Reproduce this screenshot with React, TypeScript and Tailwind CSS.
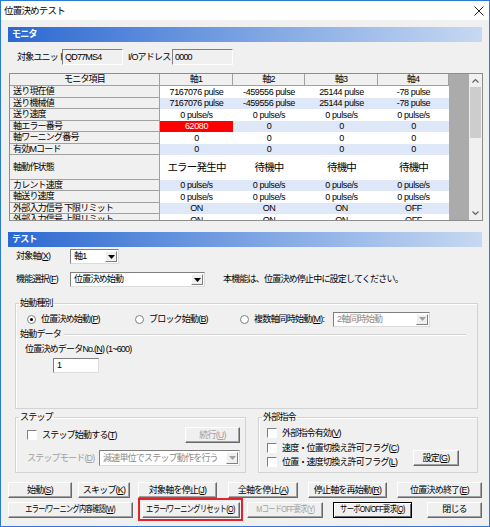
import React from 'react';

type Row = { label: string; vals: string[]; tall?: boolean; h: string; err?: boolean };

const rows: Row[] = [
  { label: '送り現在値', vals: ['7167076 pulse', '-459556 pulse', '25144 pulse', '-78 pulse'], h: 'h-[12px]' },
  { label: '送り機械値', vals: ['7167076 pulse', '-459556 pulse', '25144 pulse', '-78 pulse'], h: 'h-[11px]' },
  { label: '送り速度', vals: ['0 pulse/s', '0 pulse/s', '0 pulse/s', '0 pulse/s'], h: 'h-[12px]' },
  { label: '軸エラー番号', vals: ['62080', '0', '0', '0'], h: 'h-[11px]', err: true },
  { label: '軸ワーニング番号', vals: ['0', '0', '0', '0'], h: 'h-[12px]' },
  { label: '有効Mコード', vals: ['0', '0', '0', '0'], h: 'h-[11px]' },
  { label: '軸動作状態', vals: ['エラー発生中', '待機中', '待機中', '待機中'], h: 'h-[25px]', tall: true },
  { label: 'カレント速度', vals: ['0 pulse/s', '0 pulse/s', '0 pulse/s', '0 pulse/s'], h: 'h-[11px]' },
  { label: '軸送り速度', vals: ['0 pulse/s', '0 pulse/s', '0 pulse/s', '0 pulse/s'], h: 'h-[12px]' },
  { label: '外部入力信号 下限リミット', vals: ['ON', 'ON', 'ON', 'OFF'], h: 'h-[11px]' },
  { label: '外部入力信号 上限リミット', vals: ['ON', 'ON', 'ON', 'OFF'], h: 'h-[12px]' },
];

const axisW = ['w-[73px]', 'w-[72px]', 'w-[73px]', 'w-[71px]'];

const U: React.FC<{ c: string }> = ({ c }) => <span className="underline">{c}</span>;

const Bar: React.FC<{ title: string }> = ({ title }) => (
  <div className="h-[15px] flex items-center bg-linear-to-r from-[#2a68d1] via-[#7aa2e2] to-[#c7d8f1] text-white font-bold pl-[4px]">
    {title}
  </div>
);

const Btn: React.FC<{ w: string; children: React.ReactNode; disabled?: boolean; def?: boolean; narrow?: boolean }> = ({ w, children, disabled, def, narrow }) => (
  <div
    className={
      w +
      ' h-[16px] flex items-center justify-center bg-[#f0f0f0] border ' +
      (def ? 'border-black shadow-[inset_1px_1px_0_#fff,inset_-1px_-1px_0_#696969]' : 'border-t-white border-l-white border-r-[#696969] border-b-[#696969] shadow-[inset_-1px_-1px_0_#a0a0a0]') +
      (disabled ? ' text-[#a0a0a0]' : ' text-black')
    }
  >
    {narrow ? <span className="inline-block scale-x-[0.8]">{children}</span> : children}
  </div>
);

const Combo: React.FC<{ w: string; text: string; disabled?: boolean }> = ({ w, text, disabled }) => (
  <div className={w + ' h-full flex bg-white border border-t-[#808080] border-l-[#808080] border-r-[#dcdcdc] border-b-[#dcdcdc] ' + (disabled ? 'text-[#8a8a8a]' : 'text-black')}>
    <div className="flex-1 flex items-center pl-[3px] overflow-hidden">{text}</div>
    <div className="w-[12px] my-[1px] mr-[1px] flex items-center justify-center bg-[#f0f0f0] border border-t-white border-l-white border-r-[#808080] border-b-[#808080]">
      <svg width="7" height="4" viewBox="0 0 7 4">
        <path d="M0 0h7L3.5 4z" fill={disabled ? '#a0a0a0' : '#000'} />
      </svg>
    </div>
  </div>
);

const Check: React.FC<{ children: React.ReactNode }> = ({ children }) => (
  <div className="flex items-center h-[12px]">
    <div className="w-[10px] h-[10px] bg-white border border-t-[#808080] border-l-[#808080] border-r-white border-b-white" />
    <span className="ml-[5px]">{children}</span>
  </div>
);

const Radio: React.FC<{ on?: boolean; w?: string; children: React.ReactNode }> = ({ on, w, children }) => (
  <div className={(w ?? '') + ' flex items-center h-[12px]'}>
    <div className="w-[9px] h-[9px] rounded-full bg-white border border-[#808080] flex items-center justify-center">
      {on && <div className="w-[3px] h-[3px] rounded-full bg-black" />}
    </div>
    <span className="ml-[5px]">{children}</span>
  </div>
);

const Chevron: React.FC<{ up?: boolean }> = ({ up }) => (
  <svg width="7" height="5" viewBox="0 0 7 5">
    <path d={up ? 'M0.5 4.5L3.5 1.5L6.5 4.5' : 'M0.5 0.5L3.5 3.5L6.5 0.5'} fill="none" stroke="#606060" strokeWidth="1.2" />
  </svg>
);

export default function App() {
  return (
    <div className="w-[490px] h-[527px] border border-[#2b7ad6] bg-[#f0f0f0] flex flex-col text-[9px] leading-none tracking-[-0.8px] whitespace-nowrap text-black font-['Liberation_Sans','Noto_Sans_CJK_JP',sans-serif] overflow-hidden">
      {/* title bar */}
      <div className="h-[19px] bg-white flex items-center justify-between pl-[3px] pr-[5px] text-[9.5px]">
        <span>位置決めテスト</span>
        <svg width="10" height="10" viewBox="0 0 10 10">
          <path d="M0.5 0.5L9.5 9.5M9.5 0.5L0.5 9.5" stroke="#222" strokeWidth="1" />
        </svg>
      </div>

      <div className="flex flex-col px-[7px]">
        <div className="mt-[7px]">
          <Bar title="モニタ" />
        </div>

        {/* unit row */}
        <div className="mt-[7px] h-[16px] flex items-center">
          <span className="ml-[9px] w-[45px]">対象ユニット</span>
          <div className="w-[61px] h-full flex items-center pl-[2px] bg-[#f0f0f0] border border-t-[#808080] border-l-[#808080] border-r-white border-b-white">QD77MS4</div>
          <span className="ml-[5px] w-[44px]">I/Oアドレス</span>
          <div className="w-[61px] h-full flex items-center pl-[2px] bg-[#f0f0f0] border border-t-[#808080] border-l-[#808080] border-r-white border-b-white">0000</div>
        </div>

        {/* monitor table */}
        <div className="mt-[8px] ml-[1px] w-[474px] h-[148px] flex border border-[#8d8d8d] bg-white">
          <div className="w-[439px] flex flex-col overflow-hidden">
            <div className="h-[12px] flex shrink-0 bg-[#f0f0f0]">
              <div className="w-[150px] flex items-center justify-center border-r border-b border-[#a0a0a0]">モニタ項目</div>
              {['軸1', '軸2', '軸3', '軸4'].map((a, i) => (
                <div key={a} className={axisW[i] + ' flex items-center justify-center border-r border-b border-[#a0a0a0]'}>{a}</div>
              ))}
            </div>
            {rows.map((r, ri) => (
              <div key={ri} className={r.h + ' flex shrink-0 ' + (ri % 2 === 1 ? 'bg-[#dfe8f8]' : 'bg-white')}>
                <div className="w-[150px] flex items-center pl-[3px] bg-[#f0f0f0] border-r border-b border-[#a0a0a0]">{r.label}</div>
                {r.vals.map((v, vi) => (
                  <div
                    key={vi}
                    className={
                      axisW[vi] +
                      ' flex items-center justify-center tracking-[-0.4px]' +
                      (r.tall ? ' text-[10.5px] tracking-[-0.8px]' : '') +
                      (r.err && vi === 0 ? ' bg-[#ff0000] text-white' : '')
                    }
                  >
                    {v}
                  </div>
                ))}
              </div>
            ))}
          </div>
          <div className="w-[20px] bg-[#ababab]" />
          <div className="w-[13px] flex flex-col bg-[#f0f0f0]">
            <div className="h-[13px] flex items-center justify-center"><Chevron up /></div>
            <div className="flex-1 px-[1px]">
              <div className="h-[51px] bg-[#cdcdcd]" />
            </div>
            <div className="h-[13px] flex items-center justify-center"><Chevron /></div>
          </div>
        </div>

        <div className="mt-[11px]">
          <Bar title="テスト" />
        </div>

        {/* target axis */}
        <div className="mt-[2px] h-[15px] flex items-center">
          <span className="ml-[8px] w-[54px]">対象軸(<U c="X" />)</span>
          <Combo w="w-[49px]" text="軸1" />
        </div>
        <div className="mt-[8px] h-[15px] flex items-center">
          <span className="ml-[8px] w-[54px]">機能選択(<U c="F" />)</span>
          <Combo w="w-[135px]" text="位置決め始動" />
          <span className="ml-[18px]">本機能は、位置決め停止中に設定してください。</span>
        </div>

        {/* start type group */}
        <fieldset className="mt-[12px] ml-[7px] w-[463px] h-[110px] border border-[#d3d3d3] shadow-[inset_1px_1px_0_#fff]">
          <legend className="ml-[3px] px-[1px]">始動種別</legend>
          <div className="mt-[5px] ml-[11px] h-[12px] flex items-center">
            <Radio on w="w-[108px]">位置決め始動(<U c="P" />)</Radio>
            <Radio w="w-[105px]">ブロック始動(<U c="B" />)</Radio>
            <Radio w="w-[93px]">複数軸同時始動(<U c="M" />):</Radio>
            <div className="h-[15px]">
              <Combo w="w-[97px]" text="2軸同時始動" disabled />
            </div>
          </div>
          <div className="mt-[4px] h-[11px] flex items-center">
            <span className="ml-[4px]">始動データ</span>
            <div className="flex-1 ml-[3px] mr-[11px] border-t border-b border-t-[#d3d3d3] border-b-white" />
          </div>
          <div className="mt-[4px] ml-[9px] h-[11px] flex items-center">
            位置決めデータNo.(<U c="N" />) (1~600)
          </div>
          <div className="mt-[3px] ml-[37px] w-[46px] h-[15px] flex items-center pl-[3px] bg-white border border-t-[#808080] border-l-[#808080] border-r-[#dcdcdc] border-b-[#dcdcdc]">1</div>
        </fieldset>

        {/* step + external */}
        <div className="mt-[4px] ml-[7px] flex">
          <fieldset className="w-[231px] h-[60px] border border-[#d3d3d3] shadow-[inset_1px_1px_0_#fff]">
            <legend className="ml-[3px] px-[1px]">ステップ</legend>
            <div className="mt-[5px] ml-[11px] mr-[5px] h-[16px] flex items-center justify-between">
              <Check>ステップ始動する(<U c="T" />)</Check>
              <Btn w="w-[55px]" disabled>続行(<U c="U" />)</Btn>
            </div>
            <div className="mt-[7px] ml-[11px] mr-[5px] h-[16px] flex items-center justify-between">
              <span className="text-[#a0a0a0]">ステップモード(<U c="D" />)</span>
              <Combo w="w-[141px]" text="減速単位でステップ動作を行う" disabled />
            </div>
          </fieldset>
          <fieldset className="ml-[12px] w-[220px] h-[60px] border border-[#d3d3d3] shadow-[inset_1px_1px_0_#fff]">
            <legend className="ml-[3px] px-[1px]">外部指令</legend>
            <div className="mt-[5px] ml-[8px]">
              <Check>外部指令有効(<U c="V" />)</Check>
            </div>
            <div className="mt-[3px] ml-[8px] mr-[18px] flex items-end justify-between">
              <div className="flex flex-col gap-[2px]">
                <Check>速度・位置切換え許可フラグ(<U c="C" />)</Check>
                <Check>位置・速度切換え許可フラグ(<U c="L" />)</Check>
              </div>
              <div className="mb-[2px]">
                <Btn w="w-[46px]">設定(<U c="G" />)</Btn>
              </div>
            </div>
          </fieldset>
        </div>

        {/* buttons */}
        <div className="mt-[9px] flex items-center">
          <Btn w="w-[64px]">始動(<U c="S" />)</Btn>
          <div className="ml-[6px]"><Btn w="w-[52px]">スキップ(<U c="K" />)</Btn></div>
          <div className="ml-[8px]"><Btn w="w-[79px]">対象軸を停止(<U c="J" />)</Btn></div>
          <div className="ml-[11px]"><Btn w="w-[70px]">全軸を停止(<U c="A" />)</Btn></div>
          <div className="ml-[10px]"><Btn w="w-[79px]">停止軸を再始動(<U c="R" />)</Btn></div>
          <div className="ml-[10px]"><Btn w="w-[85px]">位置決め終了(<U c="E" />)</Btn></div>
        </div>
        <div className="flex items-center h-[23px]">
          <Btn w="w-[125px]" narrow>エラー/ワーニング内容確認(<U c="W" />)</Btn>
          <div className="ml-[5px] w-[105px] h-[23px] border-2 border-[#e5222b] flex items-center justify-center">
            <Btn w="w-[98px]" narrow>エラー/ワーニングリセット(<U c="O" />)</Btn>
          </div>
          <div className="ml-[4px]"><Btn w="w-[76px]" disabled narrow>MコードOFF要求(<U c="Y" />)</Btn></div>
          <div className="ml-[10px]"><Btn w="w-[79px]" def narrow>サーボON/OFF要求(<U c="Q" />)</Btn></div>
          <div className="ml-[15px]"><Btn w="w-[55px]">閉じる</Btn></div>
        </div>
      </div>
    </div>
  );
}
